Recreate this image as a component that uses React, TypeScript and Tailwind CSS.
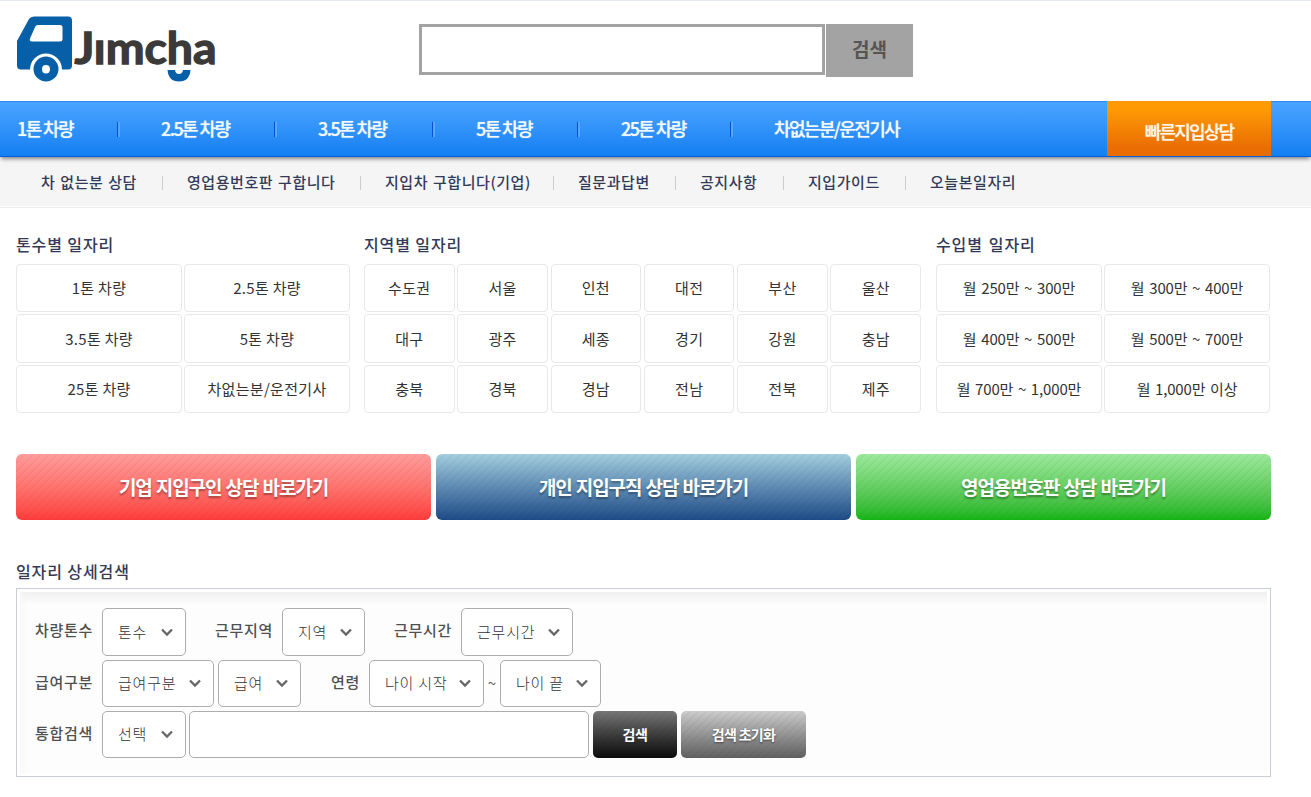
import clsx from "clsx";

const NAV_ITEMS = [
  { label: "1톤 차량", width: "w-[144px]" },
  { label: "2.5톤 차량", width: "w-[157px]" },
  { label: "3.5톤 차량", width: "w-[158px]" },
  { label: "5톤 차량", width: "w-[145px]" },
  { label: "25톤 차량", width: "w-[153px]" },
];

const SUB_ITEMS = [
  { label: "차 없는분 상담", width: "w-[146px]" },
  { label: "영업용번호판 구합니다", width: "w-[198px]" },
  { label: "지입차 구합니다(기업)", width: "w-[193px]" },
  { label: "질문과답변", width: "w-[122px]" },
  { label: "공지사항", width: "w-[108px]" },
  { label: "지입가이드", width: "w-[122px]" },
];

const TONS = ["1톤 차량", "2.5톤 차량", "3.5톤 차량", "5톤 차량", "25톤 차량", "차없는분/운전기사"];

const REGIONS = [
  "수도권", "서울", "인천", "대전", "부산", "울산",
  "대구", "광주", "세종", "경기", "강원", "충남",
  "충북", "경북", "경남", "전남", "전북", "제주",
];

const INCOMES = [
  "월 250만 ~ 300만", "월 300만 ~ 400만",
  "월 400만 ~ 500만", "월 500만 ~ 700만",
  "월 700만 ~ 1,000만", "월 1,000만 이상",
];

const STRIPES =
  "bg-[repeating-linear-gradient(135deg,rgba(0,0,0,0.035)_0px,rgba(0,0,0,0.035)_1.8px,transparent_1.8px,transparent_5.66px)]";

function Logo() {
  return (
    <svg width="204" height="68" viewBox="14 15 204 68" role="img" aria-label="Jimcha">
      <path
        fill="#075fa8"
        fillRule="evenodd"
        d="M34 16.500H68Q72 16.500 72 20.500V65.500Q72 69.500 68 69.500H62A16 16 0 0 0 30 69.500H21Q17 69.500 17 65.500V41L29 19Q30.500 16.500 34 16.500ZM37.500 25Q36 25 35.300 26.500L30 38.500Q29 41.500 32 41.500H60Q62.500 41.500 62.500 39V27.500Q62.500 25 60 25Z"
      />
      <path
        fill="#075fa8"
        fillRule="evenodd"
        d="M46 56.500a12.500 12.500 0 1 0 0 25a12.500 12.500 0 1 0 0-25ZM46 65a4 4.200 0 1 1 0 8.400a4 4.200 0 1 1 0-8.400Z"
      />
      <text
        x="74.500"
        y="64"
        fontSize="43"
        fontWeight="700"
        textLength="142"
        lengthAdjust="spacingAndGlyphs"
        fill="#3b3a38"
        stroke="#3b3a38"
        strokeWidth="1.3"
        className="font-['Lato',sans-serif]"
      >
        Jımcha
      </text>
      <path fill="#075fa8" d="M167.500 70H175Q175.500 74 179 74Q182.500 74 183 70H190.500Q189.500 81.500 179 81.500Q168.500 81.500 167.500 70Z" />
    </svg>
  );
}

function JobGrid({
  title,
  items,
  className,
  columns,
}: {
  title: string;
  items: string[];
  className: string;
  columns: string;
}) {
  return (
    <section className={className}>
      <h2 className="h-[30px] text-[16px] leading-[20px] font-medium tracking-[0.9px] text-[#333a56]">{title}</h2>
      <div className={clsx("grid h-[149px] grid-rows-[48px_49px_48px] content-between", columns)}>
        {items.map((item) => (
          <a
            key={item}
            href="#"
            className="flex items-center justify-center rounded-[4px] border border-[#e8e8e8] bg-white pt-px text-[15px] whitespace-nowrap text-[#333]"
          >
            {item}
          </a>
        ))}
      </div>
    </section>
  );
}

function BannerButton({ label, color }: { label: string; color: string }) {
  return (
    <button className={clsx("h-[66px] w-[415px] overflow-hidden rounded-[6px]", color)}>
      <span
        className={clsx(
          "flex h-full items-center justify-center text-[19px] font-bold tracking-[-1.1px] text-white [text-shadow:0_2px_2px_rgba(0,0,0,0.35)] [word-spacing:1px]",
          STRIPES,
        )}
      >
        {label}
      </span>
    </button>
  );
}

function Label({ text, className }: { text: string; className?: string }) {
  return (
    <span className={clsx("shrink-0 pb-[3px] text-[15px] font-medium tracking-[0.7px] whitespace-nowrap text-[#505050]", className)}>
      {text}
    </span>
  );
}

function Select({ text, className }: { text: string; className: string }) {
  return (
    <button
      className={clsx(
        "flex h-full shrink-0 items-center justify-between rounded-[5px] border border-[#adadad] bg-white pr-[12px] pl-[15px] text-[15px] font-light tracking-[0.8px] whitespace-nowrap text-[#333]",
        className,
      )}
    >
      {text}
      <svg width="12" height="9" viewBox="0 0 12 9" fill="none">
        <path d="M1 1.500L6 6.500L11 1.500" stroke="#666" strokeWidth="2.3" />
      </svg>
    </button>
  );
}

export default function App() {
  return (
    <div className="h-[797px] w-[1311px] overflow-hidden border-t border-[#e3e8ee] bg-white font-['Noto_Sans_CJK_KR',sans-serif]">
      {/* header */}
      <header className="flex h-[100px] items-start">
        <a href="#" className="mt-[14px] ml-[14px] w-[204px]">
          <Logo />
        </a>
        <form className="mt-[23px] ml-[201px] flex items-start gap-px">
          <input className="h-[51px] w-[406px] border-[3px] border-[#a3a3a3] bg-white outline-none" />
          <button type="button" className="h-[53px] w-[87px] bg-[#a3a3a3] pb-[2px] text-[19px] font-bold text-[#555]">
            검색
          </button>
        </form>
      </header>

      {/* main navigation */}
      <nav className="relative flex h-[56px] border-t border-b border-t-[#2f87ea] border-b-[#0b5cd5] bg-linear-to-b from-[#49a4ff] to-[#107ff3] pl-[17px] text-[18px] font-medium tracking-[-1.6px] whitespace-nowrap text-[#f2f9ff] shadow-[0_3px_4px_-1px_rgba(0,0,0,0.45)] [text-shadow:0_0_1px_rgba(255,255,255,0.7)]">
        {NAV_ITEMS.map((item) => (
          <a key={item.label} href="#" className={clsx("flex items-center justify-between", item.width)}>
            <span className="pb-[2px]">{item.label}</span>
            <span className="mr-[41px] h-[15px] w-[3px] border-l border-[#0b4fd5] bg-[#55a8ff]" />
          </a>
        ))}
        <a href="#" className="flex w-[333px] items-center pb-[2px]">
          차없는분/운전기사
        </a>
        <a
          href="#"
          className="-mt-px flex w-[164px] items-center justify-center bg-linear-to-b from-[#ff9a05] from-15% to-[#e96d03] to-85% pt-[5px] tracking-[-1.8px] text-[#fff6e8]"
        >
          빠른지입상담
        </a>
      </nav>

      {/* sub navigation */}
      <nav className="border-b border-[#ececec] pb-px">
        <div className="flex h-[49px] bg-[#f5f5f5] pt-[2px] pl-[41px] text-[15px] font-medium tracking-[0.55px] whitespace-nowrap text-[#343b58] [word-spacing:1px]">
          {SUB_ITEMS.map((item) => (
            <a key={item.label} href="#" className={clsx("flex items-center justify-between", item.width)}>
              {item.label}
              <span className="mr-[24px] h-[14px] w-px bg-[#ccc]" />
            </a>
          ))}
          <a href="#" className="flex items-center">
            오늘본일자리
          </a>
        </div>
      </nav>

      <main className="w-[1271px] pt-[26px] pl-[16px]">
        <div className="flex">
          <JobGrid title="톤수별 일자리" items={TONS} className="w-[334px] tracking-[0.3px]" columns="grid-cols-2 gap-x-[2px]" />
          <JobGrid
            title="지역별 일자리"
            items={REGIONS}
            className="ml-[14px] w-[557px] tracking-[0.3px]"
            columns="grid-cols-[repeat(6,90.5px)] justify-between"
          />
          <JobGrid
            title="수입별 일자리"
            items={INCOMES}
            className="ml-[15px] w-[334px] tracking-[-0.15px] [word-spacing:1.5px]"
            columns="grid-cols-2 gap-x-[2px]"
          />
        </div>

        <div className="mt-[41px] flex gap-[5px]">
          <BannerButton label="기업 지입구인 상담 바로가기" color="bg-linear-to-b from-[#ff9c9c] to-[#ff3b3b]" />
          <BannerButton label="개인 지입구직 상담 바로가기" color="bg-linear-to-b from-[#a4cfdf] to-[#1e4b86]" />
          <BannerButton label="영업용번호판 상담 바로가기" color="bg-linear-to-b from-[#9ce99c] to-[#10b510]" />
        </div>

        {/* detail search */}
        <h2 className="mt-[41px] h-[27px] text-[16px] leading-[20px] font-medium tracking-[0.9px] text-[#333a56]">
          일자리 상세검색
        </h2>
        <div className="h-[189px] border border-[#c8ced3] bg-white p-[3px]">
          <div className="flex h-full flex-col gap-[4px] bg-[#fdfdfd] bg-[linear-gradient(to_bottom,#f0f0f0,#fdfdfd_13px)] pt-[16px] pl-[15px] shadow-[inset_7px_0_7px_-5px_#f7f7f7]">
            <div className="flex h-[48px] items-center">
              <Label text="차량톤수" className="w-[67px]" />
              <Select text="톤수" className="w-[84px]" />
              <Label text="근무지역" className="ml-[29px] w-[67px]" />
              <Select text="지역" className="w-[83px]" />
              <Label text="근무시간" className="ml-[29px] w-[67px]" />
              <Select text="근무시간" className="w-[112px]" />
            </div>
            <div className="flex h-[47px] items-center">
              <Label text="급여구분" className="w-[67px]" />
              <Select text="급여구분" className="w-[112px]" />
              <Select text="급여" className="ml-[4px] w-[83px]" />
              <Label text="연령" className="ml-[30px] w-[38px]" />
              <Select text="나이 시작" className="w-[115px]" />
              <span className="w-[16px] text-center text-[15px] text-[#555]">~</span>
              <Select text="나이 끝" className="w-[101px]" />
            </div>
            <div className="flex h-[47px] items-center">
              <Label text="통합검색" className="w-[67px]" />
              <Select text="선택" className="w-[84px]" />
              <input className="ml-[3px] h-full w-[400px] rounded-[5px] border border-[#adadad] bg-white outline-none" />
              <button className="ml-[4px] h-full w-[84px] overflow-hidden rounded-[5px] bg-linear-to-b from-[#777] to-[#0c0c0c]">
                <span
                  className={clsx(
                    "flex h-full items-center justify-center text-[14px] font-bold tracking-[-0.5px] text-white",
                    STRIPES,
                  )}
                >
                  검색
                </span>
              </button>
              <button className="ml-[4px] h-full w-[125px] overflow-hidden rounded-[5px] bg-linear-to-b from-[#ccc] to-[#606060]">
                <span
                  className={clsx(
                    "flex h-full items-center justify-center text-[14px] font-bold tracking-[-0.7px] text-white [text-shadow:0_1px_2px_rgba(0,0,0,0.5)]",
                    STRIPES,
                  )}
                >
                  검색 초기화
                </span>
              </button>
            </div>
          </div>
        </div>
      </main>
    </div>
  );
}
